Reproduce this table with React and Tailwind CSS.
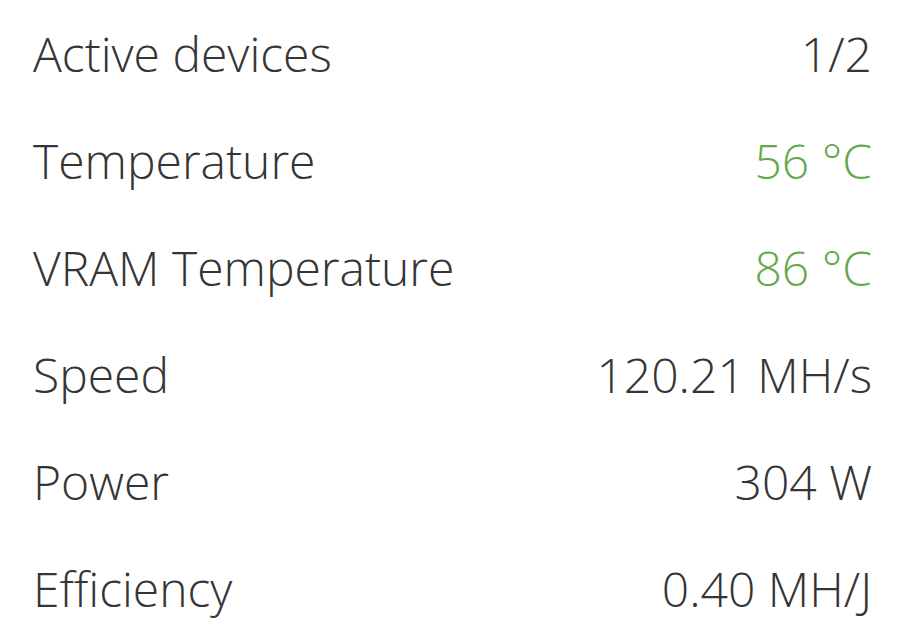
import React from "react";

const rows = [
  { label: "Active devices", value: "1/2" },
  { label: "Temperature", value: "56 °C", good: true },
  { label: "VRAM Temperature", value: "86 °C", good: true },
  { label: "Speed", value: "120.21 MH/s" },
  { label: "Power", value: "304 W" },
  { label: "Efficiency", value: "0.40 MH/J" },
];

export default function App() {
  return (
    <div className="min-h-screen bg-white px-[33px] font-['Open_Sans',sans-serif] font-light text-[#353535]">
      {rows.map((row) => (
        <div key={row.label} className="flex h-[107px] items-center justify-between text-[48px] leading-none">
          <span>{row.label}</span>
          <span className={row.good ? "text-[#67a84c]" : ""}>{row.value}</span>
        </div>
      ))}
    </div>
  );
}
